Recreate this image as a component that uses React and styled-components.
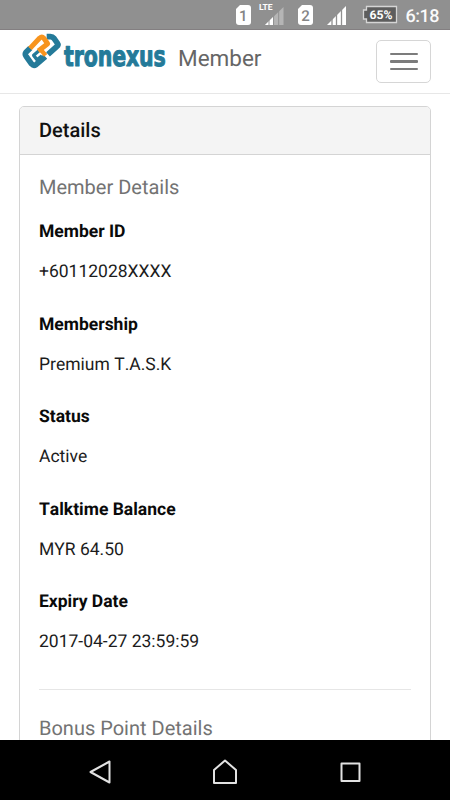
import React from 'react';
import styled, { createGlobalStyle } from 'styled-components';

const GlobalStyle = createGlobalStyle`
  * {
    box-sizing: border-box;
  }
  body {
    margin: 0;
    background: #fff;
    overflow: hidden;
    font-family: Roboto, "Liberation Sans", sans-serif;
    text-rendering: geometricPrecision;
  }
`;

const Screen = styled.div`
  width: 450px;
  height: 800px;
  display: flex;
  flex-direction: column;
  background: #fff;
`;

const StatusBar = styled.div`
  flex: none;
  height: 30px;
  background: #909090;
  border-bottom: 1px solid #837f81;

  svg {
    display: block;
  }
`;

const Navbar = styled.header`
  flex: none;
  height: 64px;
  display: flex;
  align-items: flex-start;
  padding: 0 19px 0 20px;
  border-bottom: 1px solid #e7e7e7;
`;

const Logo = styled.svg`
  display: block;
  flex: none;
  width: 150px;
  height: 46px;
`;

const Brand = styled.span`
  margin-left: 8px;
  padding-top: 16px;
  font-size: 22.5px;
  line-height: 26px;
  color: #666;
`;

const MenuButton = styled.button`
  width: 55px;
  height: 43px;
  margin: 10px 0 0 auto;
  padding: 0;
  display: flex;
  flex-direction: column;
  align-items: center;
  justify-content: center;
  gap: 5px;
  background: #fff;
  border: 1px solid #d6d6d6;
  border-radius: 5px;
`;

const Bar = styled.span`
  width: 28px;
  height: 2.5px;
  border-radius: 1px;
  background: #7c7c7c;
`;

const Content = styled.main`
  flex: 1;
  min-height: 0;
  overflow: hidden;
  padding: 12px 19px 0;
`;

const Panel = styled.section`
  height: 700px;
  border: 1px solid #d4d4d4;
  border-radius: 5px;
`;

const PanelHeading = styled.h3`
  height: 48px;
  margin: 0;
  padding: 0 19px;
  background: #f4f4f4;
  border-bottom: 1px solid #d4d4d4;
  border-radius: 4px 4px 0 0;
  font-size: 20px;
  font-weight: 500;
  line-height: 47px;
  color: #111;
`;

const PanelBody = styled.div`
  padding: 19px 19px 0;
`;

const SectionTitle = styled.h4`
  margin: 0;
  font-size: 20px;
  font-weight: 400;
  line-height: 26px;
  color: #737373;
`;

const Fields = styled.dl`
  margin: 20.2px 0 0;
  display: flex;
  flex-direction: column;
  gap: 27.5px;
  font-kerning: none;
`;

const Label = styled.dt`
  font-size: 17.5px;
  font-weight: 700;
  line-height: 25px;
  color: #0a0a0a;
`;

const Value = styled.dd`
  margin: 15px 0 0;
  font-size: 17.5px;
  line-height: 25px;
  color: #1c1c1c;
`;

const Divider = styled.hr`
  height: 1px;
  margin: 33.8px 0 25px;
  border: 0;
  background: #e6e6e6;
`;

const SystemNav = styled.nav`
  flex: none;
  height: 60px;
  background: #000;

  svg {
    display: block;
  }
`;

const details = [
  { label: 'Member ID', value: '+60112028XXXX' },
  { label: 'Membership', value: 'Premium T.A.S.K' },
  { label: 'Status', value: 'Active' },
  { label: 'Talktime Balance', value: 'MYR 64.50' },
  { label: 'Expiry Date', value: '2017-04-27 23:59:59' },
];

function StatusIcons() {
  return (
    <StatusBar>
      <svg width="450" height="29" fontFamily="Roboto, sans-serif">
        {/* sim 1 */}
        <path d="M240 5h8q3 0 3 3v14q0 3-3 3h-9q-3 0-3-3V9z" fill="#fff" />
        <text x="243.3" y="21" fontSize="15" fontWeight="500" fill="#858585" textAnchor="middle">1</text>
        <text x="259" y="10" fontSize="8.500" fontWeight="700" fill="#fff" textLength="13.5">LTE</text>
        <path d="M265 25L283.5 7v18z" fill="#b5b5b5" />
        <path d="M265 25l8-8v8z" fill="#fff" />
        <path d="M269 17v8M273.6 12v13M278.7 8v17" stroke="#909090" strokeWidth="1" />
        {/* sim 2 */}
        <path d="M302 5h8q3 0 3 3v14q0 3-3 3h-9q-3 0-3-3V9z" fill="#fff" />
        <text x="305.6" y="21" fontSize="15" fontWeight="500" fill="#858585" textAnchor="middle">2</text>
        <path d="M327 25L346 6v19z" fill="#fff" />
        <path d="M332 17v8M336.5 12v13M341.5 8v17" stroke="#909090" strokeWidth="1.3" />
        {/* battery */}
        <path d="M366.5 6.5h30v16h-30v-3.500h-3v-9h3z" fill="#5d5d5d" stroke="#d5d5d5" strokeWidth="1.3" />
        <text x="369.5" y="19" fontSize="12" fontWeight="700" fill="#fff" textLength="23" lengthAdjust="spacingAndGlyphs">65%</text>
        <text x="405.500" y="22" fontSize="18" fontWeight="500" fill="#fafafa" textLength="34">6:18</text>
      </svg>
    </StatusBar>
  );
}

function TronexusLogo() {
  return (
    <Logo viewBox="0 0 150 46">
      <g transform="translate(0 -.3) scale(.3333)" fill="none" strokeWidth="17" strokeLinejoin="round">
        <path d="M80 21h11q7 0 11 5l10 14q4 6-2 11L84 74" stroke="#247a99" />
        <path d="M31 55L18 68q-4 5 0 11l17 24q6 7 13 2l28-24" stroke="#247a99" />
        <path d="M56 64L41 77l10 13 15-12" stroke="#247a99" strokeWidth="10" />
        <path d="M30 56L59 25q7-6 12 0l12 17-28 22" stroke="#f7941e" strokeWidth="15" />
        <path d="M61 58l16 19" stroke="#f7941e" strokeWidth="13" />
      </g>
      <text
        transform="translate(44 36) scale(.707 .97)"
        fontFamily="'DejaVu Sans', sans-serif"
        fontSize="29"
        fontWeight="700"
        fill="#247a99"
        stroke="#247a99"
        strokeWidth="1.1"
        strokeLinejoin="round"
        textLength="144"
      >
        tronexus
      </text>
    </Logo>
  );
}

function App() {
  return (
    <>
      <GlobalStyle />
      <Screen>
        <StatusIcons />
        <Navbar>
          <TronexusLogo />
          <Brand>Member</Brand>
          <MenuButton aria-label="Toggle navigation">
            <Bar />
            <Bar />
            <Bar />
          </MenuButton>
        </Navbar>
        <Content>
          <Panel>
            <PanelHeading>Details</PanelHeading>
            <PanelBody>
              <SectionTitle>Member Details</SectionTitle>
              <Fields>
                {details.map((item) => (
                  <div key={item.label}>
                    <Label>{item.label}</Label>
                    <Value>{item.value}</Value>
                  </div>
                ))}
              </Fields>
              <Divider />
              <SectionTitle>Bonus Point Details</SectionTitle>
            </PanelBody>
          </Panel>
        </Content>
        <SystemNav>
          <svg width="450" height="60" fill="none" stroke="#e2e2e2" strokeWidth="2" strokeLinejoin="round">
            <path d="M109.500 21.500v21L90.500 32z" />
            <path d="M225 20.500l11 9.500v13h-22V30z" />
            <path d="M341.500 23.500h18v17.500h-18z" />
          </svg>
        </SystemNav>
      </Screen>
    </>
  );
}

export default App;
